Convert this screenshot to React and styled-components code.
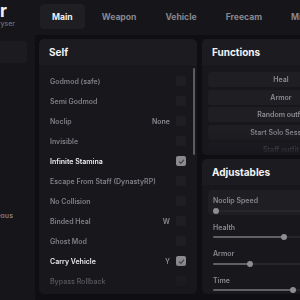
import React from "react";
import styled, { createGlobalStyle } from "styled-components";

const Global = createGlobalStyle`
  html, body { margin: 0; padding: 0; background: #0f0e12; width: 300px; height: 300px; overflow: hidden; }
  body { font-family: Inter, "Noto Sans", sans-serif; -webkit-font-smoothing: antialiased; }
`;

const Window = styled.div`
  display: flex;
  flex-direction: column;
  width: 560px;
  height: 300px;
  margin-left: -84px;
  background: #0f0e12;
`;

const TopBar = styled.div`
  display: flex;
  align-items: flex-start;
  height: 35px;
  flex-shrink: 0;
  background: #16151a;
`;

const Brand = styled.div`
  width: 119px;
  display: flex;
  flex-direction: column;
  align-items: flex-end;
  padding-top: 3px;
`;

const BrandTitle = styled.div`
  font-size: 17px;
  font-weight: 700;
  line-height: 17px;
  color: #f2f2f4;
  margin-right: 28px;
`;

const BrandSub = styled.div`
  font-size: 7px;
  font-weight: 500;
  line-height: 8px;
  color: #6f6e74;
  margin-right: 20px;
`;

const Tabs = styled.div`
  display: flex;
  gap: 5px;
  margin-left: 5px;
  margin-top: 4px;
`;

const Tab = styled.div`
  height: 25px;
  padding: 0 12px;
  display: flex;
  align-items: center;
  border-radius: 4px;
  font-size: 8.6px;
  font-weight: 700;
  background: ${(p) => (p.$active ? "#1f1e23" : "transparent")};
  color: ${(p) => (p.$active ? "#f0f0f2" : "#88878d")};
`;

const Body = styled.div`
  display: flex;
  flex: 1;
  min-height: 0;
`;

const Sidebar = styled.div`
  width: 119px;
  flex-shrink: 0;
  background: #16151a;
  padding: 6px 8px 0 0;
  box-sizing: border-box;
  display: flex;
  flex-direction: column;
  align-items: flex-end;
`;

const SideBox = styled.div`
  width: 100%;
  height: 22px;
  border-radius: 4px;
  background: #1c1b20;
`;

const SideLabel = styled.div`
  margin-top: 148px;
  margin-right: 14px;
  font-size: 7px;
  font-weight: 600;
  color: #7d7c82;
`;

const Content = styled.div`
  display: flex;
  gap: 5px;
  padding: 4px;
  min-height: 0;
`;

const Panel = styled.div`
  background: #18171c;
  border-radius: 5px;
  overflow: hidden;
  display: flex;
  flex-direction: column;
  width: 158px;
  height: ${(p) => p.$h || "auto"};
  flex: ${(p) => (p.$grow ? 1 : "none")};
  position: relative;
`;

const Column = styled.div`
  display: flex;
  flex-direction: column;
  gap: 4px;
  width: 158px;
  height: 255px;
`;

const PanelHeader = styled.div`
  height: 26px;
  flex-shrink: 0;
  padding: 0 10px;
  display: flex;
  align-items: center;
  background: #1c1b20;
  font-size: 10px;
  font-weight: 700;
  color: #f2f2f4;
`;

const FadeList = styled.div`
  flex: 1;
  overflow: hidden;
  display: flex;
  flex-direction: column;
  padding: ${(p) => p.$pad};
  gap: ${(p) => p.$gap || "0px"};
  -webkit-mask-image: linear-gradient(to bottom, #000 ${(p) => p.$fade || "85%"}, rgba(0,0,0,${(p) => p.$end || 0}) 100%);
  mask-image: linear-gradient(to bottom, #000 ${(p) => p.$fade || "85%"}, rgba(0,0,0,${(p) => p.$end || 0}) 100%);
`;

const Row = styled.div`
  height: 20px;
  flex-shrink: 0;
  display: flex;
  align-items: center;
  padding: 0 11px;
  gap: 6px;
`;

const RowLabel = styled.div`
  flex: 1;
  white-space: nowrap;
  font-size: 7px;
  font-weight: 600;
  color: ${(p) => (p.$on ? "#ececee" : "#807f85")};
`;

const KeyLabel = styled.div`
  font-size: 7px;
  font-weight: 600;
  color: #8a898f;
`;

const Box = styled.div`
  width: 10px;
  height: 10px;
  border-radius: 2px;
  flex-shrink: 0;
  display: flex;
  align-items: center;
  justify-content: center;
  background: ${(p) => (p.$on ? "#8b8a8f" : "#1f1e23")};
`;

const ScrollThumb = styled.div`
  position: absolute;
  right: 2px;
  top: 29px;
  width: 2px;
  height: 87px;
  border-radius: 1px;
  background: #5c5b60;
`;

const FnButton = styled.div`
  height: 15px;
  flex-shrink: 0;
  border-radius: 3px;
  background: #1f1e23;
  display: flex;
  align-items: center;
  justify-content: center;
  font-size: 7px;
  font-weight: 600;
  color: #8d8c92;
  white-space: nowrap;
`;

const SliderItem = styled.div`
  height: 25px;
  flex-shrink: 0;
  padding: 6px 5px 0;
  box-sizing: border-box;
  border-radius: 4px;
  background: ${(p) => (p.$hover ? "#1f1e23" : "transparent")};
`;

const SliderLabel = styled.div`
  font-size: 7px;
  font-weight: 600;
  line-height: 9px;
  color: #8a898f;
`;

const Track = styled.div`
  position: relative;
  height: 2px;
  margin-top: 4.5px;
  border-radius: 1px;
  background: #27262b;
`;

const Fill = styled.div`
  position: absolute;
  left: 0;
  top: 0;
  height: 2px;
  border-radius: 1px;
  background: #616065;
`;

const Thumb = styled.div`
  position: absolute;
  top: -2px;
  width: 6px;
  height: 6px;
  border-radius: 50%;
  background: #8e8d92;
`;

const Check = () => (
  <svg width="7" height="7" viewBox="0 0 10 10">
    <polyline points="2,5.5 4.2,7.5 8,3" fill="none" stroke="#3b3a3f" strokeWidth="1.6" strokeLinecap="round" strokeLinejoin="round" />
  </svg>
);

const selfItems = [
  { label: "Godmod (safe)" },
  { label: "Semi Godmod" },
  { label: "Noclip", key: "None" },
  { label: "Invisible" },
  { label: "Infinite Stamina", on: true },
  { label: "Escape From Staff (DynastyRP)" },
  { label: "No Collision" },
  { label: "Binded Heal", key: "W" },
  { label: "Ghost Mod" },
  { label: "Carry Vehicle", key: "Y", on: true },
  { label: "Bypass Rollback" },
];

const functions = ["Heal", "Armor", "Random outfit", "Start Solo Session", "Staff outfit"];

const sliders = [
  { label: "Noclip Speed", v: 0, hover: true },
  { label: "Health", v: 0.52 },
  { label: "Armor", v: 0.265 },
  { label: "Time", v: 0.59 },
];

const tabs = ["Main", "Weapon", "Vehicle", "Freecam", "Misc"];

export default function App() {
  return (
    <>
      <Global />
      <Window>
        <TopBar>
          <Brand>
            <BrandTitle>Geyser</BrandTitle>
            <BrandSub>by Keyyser</BrandSub>
          </Brand>
          <Tabs>
            {tabs.map((t, i) => (
              <Tab key={t} $active={i === 0}>{t}</Tab>
            ))}
          </Tabs>
        </TopBar>
        <Body>
          <Sidebar>
            <SideBox />
            <SideLabel>Miscellaneous</SideLabel>
          </Sidebar>
          <Content>
            <Panel $h="255px">
              <PanelHeader>Self</PanelHeader>
              <FadeList $pad="6px 0 0" $fade="86%" $end="0.3">
                {selfItems.map((it) => (
                  <Row key={it.label}>
                    <RowLabel $on={it.on}>{it.label}</RowLabel>
                    {it.key && <KeyLabel>{it.key}</KeyLabel>}
                    <Box $on={it.on}>{it.on && <Check />}</Box>
                  </Row>
                ))}
              </FadeList>
              <ScrollThumb />
            </Panel>
            <Column>
              <Panel $h="116px">
                <PanelHeader>Functions</PanelHeader>
                <FadeList $pad="7px 6px 0" $gap="2.5px" $fade="72%">
                  {functions.map((f) => (
                    <FnButton key={f}>{f}</FnButton>
                  ))}
                </FadeList>
              </Panel>
              <Panel $grow>
                <PanelHeader>Adjustables</PanelHeader>
                <FadeList $pad="5px 6px 0" $gap="1.67px" $fade="100%" $end="1">
                  {sliders.map((s) => (
                    <SliderItem key={s.label} $hover={s.hover}>
                      <SliderLabel>{s.label}</SliderLabel>
                      <Track>
                        <Fill style={{ width: `calc((100% - 6px) * ${s.v} + 3px)` }} />
                        <Thumb style={{ left: `calc((100% - 6px) * ${s.v})` }} />
                      </Track>
                    </SliderItem>
                  ))}
                </FadeList>
              </Panel>
            </Column>
          </Content>
        </Body>
      </Window>
    </>
  );
}
